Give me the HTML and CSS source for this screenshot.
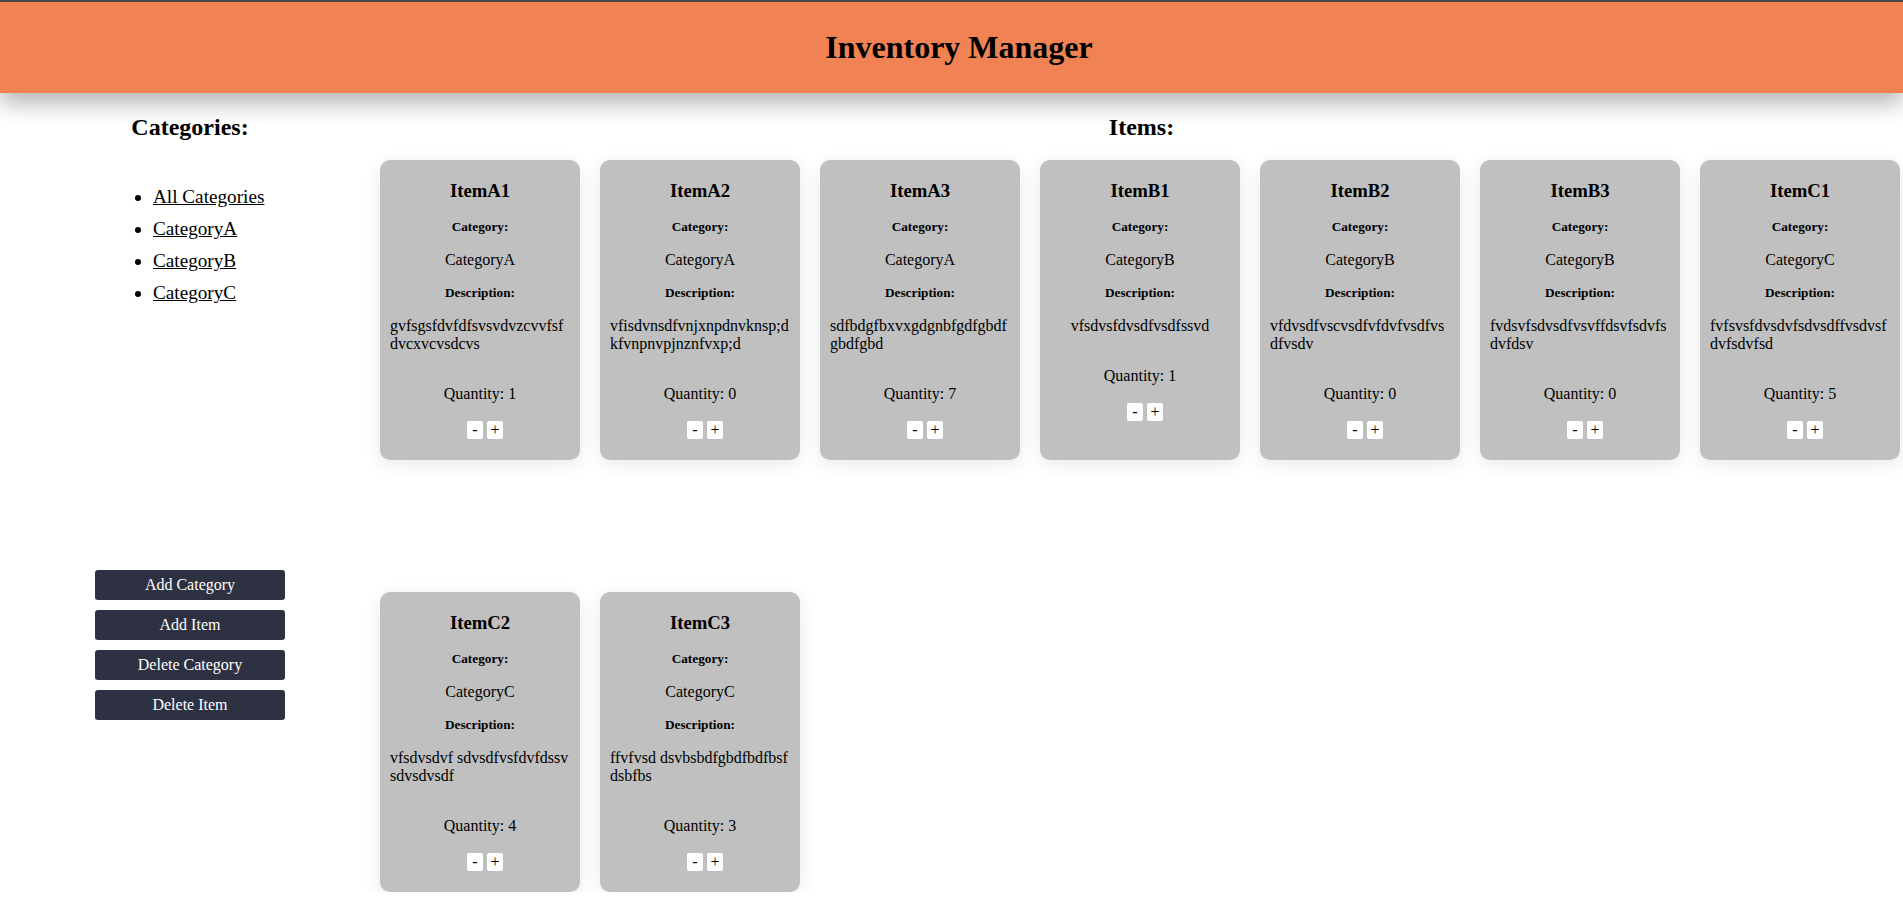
FILE: index.html
```html
<!DOCTYPE html>
<html lang="en">
<head>
<meta charset="utf-8">
<title>Inventory Manager</title>
<link rel="stylesheet" href="styles.css">
</head>
<body>
<header class="topbar">
  <h1 class="topbar-title">Inventory Manager</h1>
</header>
<main class="layout">
  <aside class="sidebar">
    <h2 class="section-title">Categories:</h2>
    <ul class="cat-list">
      <li><a href="#">All Categories</a></li>
      <li><a href="#">CategoryA</a></li>
      <li><a href="#">CategoryB</a></li>
      <li><a href="#">CategoryC</a></li>
    </ul>
    <div class="actions">
      <button class="action-btn">Add Category</button>
      <button class="action-btn">Add Item</button>
      <button class="action-btn">Delete Category</button>
      <button class="action-btn">Delete Item</button>
    </div>
  </aside>
  <section class="items">
    <h2 class="section-title">Items:</h2>
    <div class="item-grid">
      <div class="card">
        <h3 class="card-title">ItemA1</h3>
        <h5 class="card-label first">Category:</h5>
        <p class="card-cat">CategoryA</p>
        <h5 class="card-label">Description:</h5>
        <p class="card-desc">gvfsgsfdvfdfsvsvdvzcvvfsfdvcxvcvsdcvs</p>
        <p class="card-qty">Quantity: 1</p>
        <div class="qty-btns"><button class="qty-btn">-</button> <button class="qty-btn">+</button></div>
      </div>
      <div class="card">
        <h3 class="card-title">ItemA2</h3>
        <h5 class="card-label first">Category:</h5>
        <p class="card-cat">CategoryA</p>
        <h5 class="card-label">Description:</h5>
        <p class="card-desc">vfisdvnsdfvnjxnpdnvknsp;dkfvnpnvpjnznfvxp;d</p>
        <p class="card-qty">Quantity: 0</p>
        <div class="qty-btns"><button class="qty-btn">-</button> <button class="qty-btn">+</button></div>
      </div>
      <div class="card">
        <h3 class="card-title">ItemA3</h3>
        <h5 class="card-label first">Category:</h5>
        <p class="card-cat">CategoryA</p>
        <h5 class="card-label">Description:</h5>
        <p class="card-desc">sdfbdgfbxvxgdgnbfgdfgbdfgbdfgbd</p>
        <p class="card-qty">Quantity: 7</p>
        <div class="qty-btns"><button class="qty-btn">-</button> <button class="qty-btn">+</button></div>
      </div>
      <div class="card">
        <h3 class="card-title">ItemB1</h3>
        <h5 class="card-label first">Category:</h5>
        <p class="card-cat">CategoryB</p>
        <h5 class="card-label">Description:</h5>
        <p class="card-desc">vfsdvsfdvsdfvsdfssvd</p>
        <p class="card-qty">Quantity: 1</p>
        <div class="qty-btns"><button class="qty-btn">-</button> <button class="qty-btn">+</button></div>
      </div>
      <div class="card">
        <h3 class="card-title">ItemB2</h3>
        <h5 class="card-label first">Category:</h5>
        <p class="card-cat">CategoryB</p>
        <h5 class="card-label">Description:</h5>
        <p class="card-desc">vfdvsdfvscvsdfvfdvfvsdfvsdfvsdv</p>
        <p class="card-qty">Quantity: 0</p>
        <div class="qty-btns"><button class="qty-btn">-</button> <button class="qty-btn">+</button></div>
      </div>
      <div class="card">
        <h3 class="card-title">ItemB3</h3>
        <h5 class="card-label first">Category:</h5>
        <p class="card-cat">CategoryB</p>
        <h5 class="card-label">Description:</h5>
        <p class="card-desc">fvdsvfsdvsdfvsvffdsvfsdvfsdvfdsv</p>
        <p class="card-qty">Quantity: 0</p>
        <div class="qty-btns"><button class="qty-btn">-</button> <button class="qty-btn">+</button></div>
      </div>
      <div class="card">
        <h3 class="card-title">ItemC1</h3>
        <h5 class="card-label first">Category:</h5>
        <p class="card-cat">CategoryC</p>
        <h5 class="card-label">Description:</h5>
        <p class="card-desc">fvfsvsfdvsdvfsdvsdffvsdvsfdvfsdvfsd</p>
        <p class="card-qty">Quantity: 5</p>
        <div class="qty-btns"><button class="qty-btn">-</button> <button class="qty-btn">+</button></div>
      </div>
      <div class="card">
        <h3 class="card-title">ItemC2</h3>
        <h5 class="card-label first">Category:</h5>
        <p class="card-cat">CategoryC</p>
        <h5 class="card-label">Description:</h5>
        <p class="card-desc">vfsdvsdvf sdvsdfvsfdvfdssv sdvsdvsdf</p>
        <p class="card-qty">Quantity: 4</p>
        <div class="qty-btns"><button class="qty-btn">-</button> <button class="qty-btn">+</button></div>
      </div>
      <div class="card">
        <h3 class="card-title">ItemC3</h3>
        <h5 class="card-label first">Category:</h5>
        <p class="card-cat">CategoryC</p>
        <h5 class="card-label">Description:</h5>
        <p class="card-desc">ffvfvsd dsvbsbdfgbdfbdfbsf dsbfbs</p>
        <p class="card-qty">Quantity: 3</p>
        <div class="qty-btns"><button class="qty-btn">-</button> <button class="qty-btn">+</button></div>
      </div>
    </div>
  </section>
</main>
</body>
</html>
```
FILE: styles.css
```css
* { box-sizing: border-box; }

html, body {
  margin: 0;
  padding: 0;
  background: #ffffff;
  color: #000000;
  font-family: "Liberation Serif", "Times New Roman", serif;
  overflow: hidden;
}

.topbar {
  position: relative;
  z-index: 2;
  height: 93px;
  padding-left: 15px;
  background: #f08253;
  border-top: 2px solid #484848;
  box-shadow: 0 10px 22px rgba(0, 0, 0, 0.3);
  display: flex;
  align-items: center;
  justify-content: center;
}

.topbar-title {
  margin: 0;
  font-size: 32px;
  font-weight: bold;
  line-height: 37px;
}

.layout {
  display: grid;
  grid-template-columns: 380px 1fr;
}

.section-title {
  margin: 20px 0 0;
  font-size: 24px;
  font-weight: bold;
  line-height: 28px;
  text-align: center;
}

.sidebar {
  display: flex;
  flex-direction: column;
}

.cat-list {
  margin: 45px 0 0;
  padding: 0 0 0 153px;
  list-style: disc;
  font-size: 19.2px;
}

.cat-list li {
  line-height: 22px;
  margin-bottom: 10px;
}

.cat-list li:last-child { margin-bottom: 0; }

.cat-list a {
  color: #000000;
  text-decoration: underline;
}

.actions {
  margin-top: 266px;
  display: flex;
  flex-direction: column;
  align-items: center;
  gap: 10px;
}

.action-btn {
  width: 190px;
  height: 30px;
  border: none;
  border-radius: 3px;
  background: #2e3142;
  color: #ffffff;
  font-family: "Liberation Serif", "Times New Roman", serif;
  font-size: 16px;
  padding: 0;
}

.items {
  display: flex;
  flex-direction: column;
}

.item-grid {
  margin-top: 19px;
  display: flex;
  flex-wrap: wrap;
  gap: 132px 20px;
}

.card {
  width: 200px;
  height: 300px;
  padding: 0 10px;
  background: #bfc0bf;
  border-radius: 10px;
  box-shadow: 0 4px 18px rgba(0, 0, 0, 0.09);
  text-align: center;
}

.card-title {
  margin: 20px 0 0;
  font-size: 18.72px;
  font-weight: bold;
  line-height: 22px;
}

.card-label {
  margin: 16px 0 0;
  font-size: 13.28px;
  font-weight: bold;
  line-height: 16px;
}

.card-label.first { margin-top: 17px; }

.card-cat {
  margin: 16px 0 0;
  font-size: 16px;
  line-height: 18px;
}

.card-desc {
  display: inline-block;
  margin: 16px 0 0;
  font-size: 16px;
  line-height: 18px;
  text-align: left;
  word-break: break-all;
  vertical-align: top;
}

.card-qty {
  margin: 32px 0 0;
  font-size: 16px;
  line-height: 18px;
}

.qty-btns {
  margin-top: 18px;
  padding-left: 10px;
  height: 18px;
  font-size: 16px;
  line-height: 18px;
}

.qty-btn {
  width: 16px;
  height: 18px;
  padding: 0;
  border: none;
  border-radius: 2px;
  background: #ffffff;
  color: #000000;
  font-family: "Liberation Serif", "Times New Roman", serif;
  font-size: 16px;
  line-height: 18px;
  vertical-align: top;
}
```
